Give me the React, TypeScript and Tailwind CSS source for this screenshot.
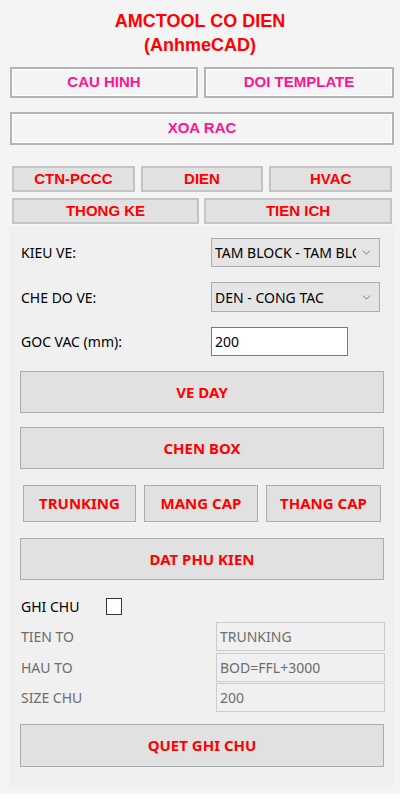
import React from 'react';
import { ChevronDown } from 'lucide-react';

const arial = { fontFamily: '"Liberation Sans", Arial, sans-serif' };
const segoe = { fontFamily: '"Noto Sans", "Open Sans", sans-serif' };

const TopButton: React.FC<{ label: string; className?: string }> = ({ label, className = '' }) => (
  <button
    className={`flex items-center justify-center border-2 border-[#b4b4b4] bg-[#f4f4f4] shadow-[inset_0_0_0_1px_#ffffff] text-[15px] font-bold text-[#ff1493] ${className}`}
    style={arial}
  >
    {label}
  </button>
);

const TabButton: React.FC<{ label: string; className?: string }> = ({ label, className = '' }) => (
  <button
    className={`flex items-center justify-center border-2 border-[#c4c4c4] bg-[#e1e1e1] text-[15px] font-bold text-[#ff0000] ${className}`}
    style={arial}
  >
    {label}
  </button>
);

const ActionButton: React.FC<{ label: string; className?: string }> = ({ label, className = '' }) => (
  <button
    className={`flex items-center justify-center border border-[#adadad] bg-[#e1e1e1] text-[15px] font-bold text-[#ff0000] ${className}`}
    style={segoe}
  >
    {label}
  </button>
);

const Select: React.FC<{ value: string; className?: string }> = ({ value, className = '' }) => (
  <div className={`flex items-center border border-[#adadad] bg-[#e5e5e5] pl-[3px] pr-[6px] ${className}`}>
    <span className="flex-1 overflow-hidden whitespace-nowrap text-[14px] text-black">{value}</span>
    <ChevronDown size={13} strokeWidth={1.5} className="ml-1 shrink-0 text-[#606060]" />
  </div>
);

const DisabledField: React.FC<{ label: string; value: string; className?: string }> = ({ label, value, className = '' }) => (
  <div className={`flex items-center ${className}`}>
    <span className="w-[207px] pl-[12px] text-[14px] text-[#6d6d6d]">{label}</span>
    <div className="flex h-[29px] w-[169px] items-center border border-[#cccccc] bg-[#f0f0f0] px-[3px] text-[14px] text-[#6d6d6d]">
      {value}
    </div>
  </div>
);

export default function App() {
  return (
    <div className="h-[800px] w-[400px] bg-white">
      <div className="flex h-[794px] flex-col bg-[#f4f4f4] pt-[9px]">
        <div className="text-center text-[18px] font-bold leading-[24px] text-[#ff0000]" style={arial}>
          <div>AMCTOOL CO DIEN</div>
          <div>(AnhmeCAD)</div>
        </div>

        <div className="mt-[10px] flex gap-[6px] pl-[10px] pr-[6px]">
          <TopButton label="CAU HINH" className="h-[31px] w-[188px]" />
          <TopButton label="DOI TEMPLATE" className="h-[31px] flex-1" />
        </div>
        <div className="mt-[14px] pl-[10px] pr-[6px]">
          <TopButton label="XOA RAC" className="h-[33px] w-full" />
        </div>

        <div className="mt-[21px] flex gap-[6px] pl-[12px] pr-[8px]">
          <TabButton label="CTN-PCCC" className="h-[26px] flex-1" />
          <TabButton label="DIEN" className="h-[26px] flex-1" />
          <TabButton label="HVAC" className="h-[26px] flex-1" />
        </div>
        <div className="mt-[6px] flex gap-[5px] pl-[12px] pr-[8px]">
          <TabButton label="THONG KE" className="h-[26px] w-[187px]" />
          <TabButton label="TIEN ICH" className="h-[26px] flex-1" />
        </div>

        <div className="ml-[9px] mt-[2px] flex h-[561px] w-[386px] flex-col bg-[#f0f0f0]" style={segoe}>
          <div className="mt-[12px] flex h-[29px] items-center">
            <span className="w-[202px] pl-[12px] text-[14px] text-black">KIEU VE:</span>
            <Select value="TAM BLOCK - TAM BLOCK" className="h-[29px] w-[169px]" />
          </div>
          <div className="mt-[15px] flex h-[30px] items-center">
            <span className="w-[202px] pl-[12px] text-[14px] text-black">CHE DO VE:</span>
            <Select value="DEN - CONG TAC" className="h-[30px] w-[169px]" />
          </div>
          <div className="mt-[15px] flex h-[29px] items-center">
            <span className="w-[202px] pl-[12px] text-[14px] text-black">GOC VAC (mm):</span>
            <div className="flex h-[29px] w-[137px] items-center border border-[#7a7a7a] bg-white px-[3px] text-[14px] text-black">
              200
            </div>
          </div>

          <ActionButton label="VE DAY" className="ml-[11px] mt-[15px] h-[42px] w-[364px]" />
          <ActionButton label="CHEN BOX" className="ml-[11px] mt-[14px] h-[42px] w-[364px]" />

          <div className="ml-[14px] mt-[16px] flex gap-[8px]">
            <ActionButton label="TRUNKING" className="h-[37px] w-[113px]" />
            <ActionButton label="MANG CAP" className="h-[37px] w-[114px]" />
            <ActionButton label="THANG CAP" className="h-[37px] w-[115px]" />
          </div>

          <ActionButton label="DAT PHU KIEN" className="ml-[11px] mt-[16px] h-[42px] w-[364px]" />

          <div className="mt-[18px] flex h-[17px] items-center">
            <span className="w-[97px] pl-[12px] text-[14px] text-black">GHI CHU</span>
            <span className="h-[17px] w-[16px] border border-[#333344] bg-white" />
          </div>

          <DisabledField label="TIEN TO" value="TRUNKING" className="mt-[7px]" />
          <DisabledField label="HAU TO" value="BOD=FFL+3000" className="mt-[2px]" />
          <DisabledField label="SIZE CHU" value="200" className="mt-[1px]" />

          <ActionButton label="QUET GHI CHU" className="ml-[11px] mt-[12px] h-[43px] w-[364px]" />
        </div>
      </div>
    </div>
  );
}
